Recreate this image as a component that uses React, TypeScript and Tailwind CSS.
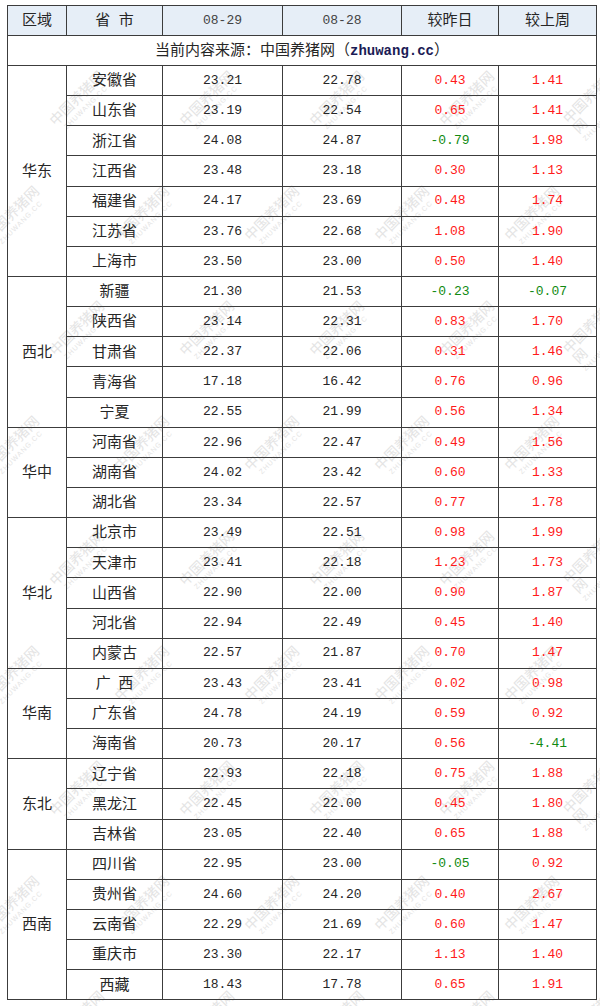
import React from 'react';

type Row = [string, string, string, string, string];

const groups: { region: string; rows: Row[] }[] = [
  {
    region: '华东',
    rows: [
      ['安徽省', '23.21', '22.78', '0.43', '1.41'],
      ['山东省', '23.19', '22.54', '0.65', '1.41'],
      ['浙江省', '24.08', '24.87', '-0.79', '1.98'],
      ['江西省', '23.48', '23.18', '0.30', '1.13'],
      ['福建省', '24.17', '23.69', '0.48', '1.74'],
      ['江苏省', '23.76', '22.68', '1.08', '1.90'],
      ['上海市', '23.50', '23.00', '0.50', '1.40'],
    ],
  },
  {
    region: '西北',
    rows: [
      ['新疆', '21.30', '21.53', '-0.23', '-0.07'],
      ['陕西省', '23.14', '22.31', '0.83', '1.70'],
      ['甘肃省', '22.37', '22.06', '0.31', '1.46'],
      ['青海省', '17.18', '16.42', '0.76', '0.96'],
      ['宁夏', '22.55', '21.99', '0.56', '1.34'],
    ],
  },
  {
    region: '华中',
    rows: [
      ['河南省', '22.96', '22.47', '0.49', '1.56'],
      ['湖南省', '24.02', '23.42', '0.60', '1.33'],
      ['湖北省', '23.34', '22.57', '0.77', '1.78'],
    ],
  },
  {
    region: '华北',
    rows: [
      ['北京市', '23.49', '22.51', '0.98', '1.99'],
      ['天津市', '23.41', '22.18', '1.23', '1.73'],
      ['山西省', '22.90', '22.00', '0.90', '1.87'],
      ['河北省', '22.94', '22.49', '0.45', '1.40'],
      ['内蒙古', '22.57', '21.87', '0.70', '1.47'],
    ],
  },
  {
    region: '华南',
    rows: [
      ['广\u2002西', '23.43', '23.41', '0.02', '0.98'],
      ['广东省', '24.78', '24.19', '0.59', '0.92'],
      ['海南省', '20.73', '20.17', '0.56', '-4.41'],
    ],
  },
  {
    region: '东北',
    rows: [
      ['辽宁省', '22.93', '22.18', '0.75', '1.88'],
      ['黑龙江', '22.45', '22.00', '0.45', '1.80'],
      ['吉林省', '23.05', '22.40', '0.65', '1.88'],
    ],
  },
  {
    region: '西南',
    rows: [
      ['四川省', '22.95', '23.00', '-0.05', '0.92'],
      ['贵州省', '24.60', '24.20', '0.40', '2.67'],
      ['云南省', '22.29', '21.69', '0.60', '1.47'],
      ['重庆市', '23.30', '22.17', '1.13', '1.40'],
      ['西藏', '18.43', '17.78', '0.65', '1.91'],
    ],
  },
];

const cjk = "font-['Liberation_Sans','Noto_Sans_CJK_SC',sans-serif]";
const mono = "font-['Liberation_Mono','Noto_Sans_CJK_SC',monospace]";
const cell = 'border border-[#3c3c3c] text-center align-middle p-0';

const Change = ({ v }: { v: string }) => (
  <span className={v.startsWith('-') ? 'text-[#118a11]' : 'text-[#ff1a1a]'}>{v}</span>
);

// diagonal watermark marks, staggered grid (sits behind the table text)
const marks: { x: number; y: number }[] = [];
for (let r = 0; r < 9; r++) {
  for (let c = 0; c < 5; c++) {
    marks.push({ x: c * 130 + (r % 2 ? 0 : 65) - 20, y: r * 115 + 90 });
  }
}

export default function App() {
  return (
    <div className="w-[600px] h-[1006px] bg-white relative overflow-hidden">
      {/* watermark */}
      <div className="absolute inset-0 pointer-events-none">
        {marks.map((m, i) => (
          <div
            key={i}
            className="absolute flex flex-col items-center -rotate-45 text-[#e4e4e4] leading-none"
            style={{ left: m.x, top: m.y }}
          >
            <span className={`text-[14px] ${cjk}`}>中国养猪网</span>
            <span className="text-[7px] tracking-[1px] font-['Liberation_Sans',sans-serif] mt-[2px]">
              ZHUWANG.CC
            </span>
          </div>
        ))}
      </div>

      <div className="relative pl-[7px] pt-[5px]">
        <table className={`border-collapse table-fixed w-[589px] text-[#262626] ${cjk}`}>
          <colgroup>
            <col className="w-[59px]" />
            <col className="w-[96px]" />
            <col className="w-[120px]" />
            <col className="w-[119px]" />
            <col className="w-[97px]" />
            <col className="w-[98px]" />
          </colgroup>
          <thead>
            <tr className="h-[30px] bg-[#e6eef7]">
              <th className={`${cell} font-normal text-[15px]`}>区域</th>
              <th className={`${cell} font-normal text-[15px]`}>省&nbsp;&nbsp;市</th>
              <th className={`${cell} font-normal text-[13px] text-[#444] ${mono}`}>08-29</th>
              <th className={`${cell} font-normal text-[13px] text-[#444] ${mono}`}>08-28</th>
              <th className={`${cell} font-normal text-[15px]`}>较昨日</th>
              <th className={`${cell} font-normal text-[15px]`}>较上周</th>
            </tr>
          </thead>
          <tbody>
            <tr className="h-[30px]">
              <td colSpan={6} className={`${cell} text-[15px]`}>
                当前内容来源：中国养猪网（
                <span className={`${mono} font-bold text-[14px] text-[#1b1b55]`}>zhuwang.cc</span>
                ）
              </td>
            </tr>
            {groups.map((g) =>
              g.rows.map((r, i) => (
                <tr key={g.region + r[0]} className="h-[30.15px]">
                  {i === 0 && (
                    <td rowSpan={g.rows.length} className={`${cell} text-[15px]`}>
                      {g.region}
                    </td>
                  )}
                  <td className={`${cell} text-[15px]`}>{r[0]}</td>
                  <td className={`${cell} text-[13px] ${mono}`}>{r[1]}</td>
                  <td className={`${cell} text-[13px] ${mono}`}>{r[2]}</td>
                  <td className={`${cell} text-[13px] ${mono}`}>
                    <Change v={r[3]} />
                  </td>
                  <td className={`${cell} text-[13px] ${mono}`}>
                    <Change v={r[4]} />
                  </td>
                </tr>
              ))
            )}
          </tbody>
        </table>
      </div>
    </div>
  );
}
